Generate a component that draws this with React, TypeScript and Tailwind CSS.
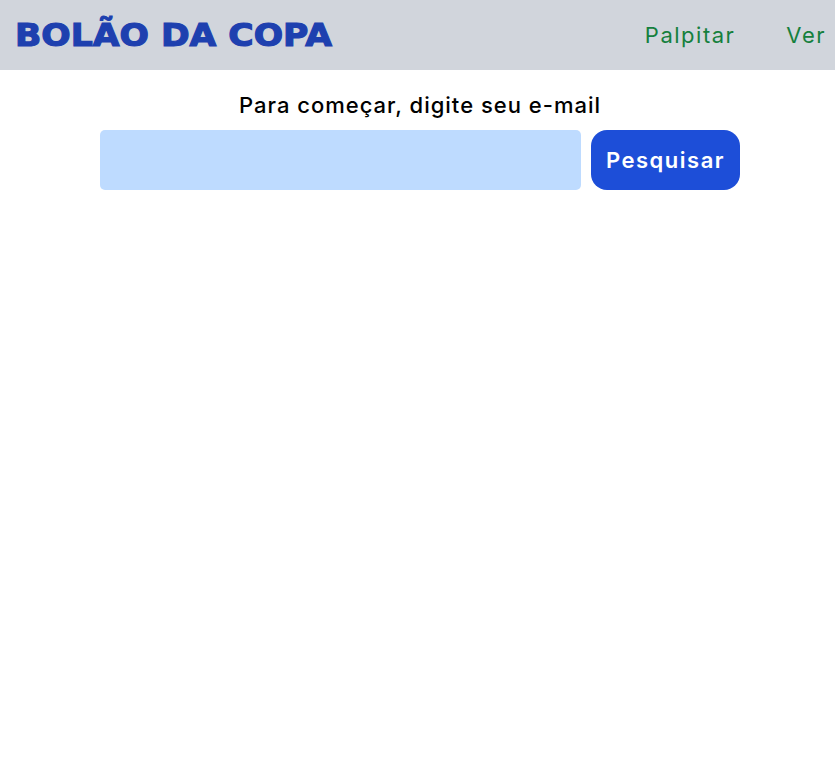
export default function App() {
  return (
    <div className="min-h-screen bg-white overflow-hidden" style={{ fontFamily: "Inter, 'Noto Sans', sans-serif" }}>
      <header className="h-[70px] bg-gray-300 flex items-center justify-between pl-[15px] pr-[9px]">
        <h1
          className="text-[32px] leading-none font-bold text-[#1e40af] origin-left scale-x-[1.08] [-webkit-text-stroke:1.2px_#1e40af]"
          style={{ fontFamily: "'DejaVu Sans', sans-serif" }}
        >
          BOLÃO DA COPA
        </h1>
        <nav className="flex items-center gap-[51px] text-[22px] text-[#15803d] tracking-[1.5px]">
          <a href="#">Palpitar</a>
          <a href="#">Ver</a>
        </nav>
      </header>
      <main className="flex flex-col">
        <p className="mt-[20px] text-center text-[22px] leading-[30px] font-medium text-black tracking-[1px] pl-[5px]">
          Para começar, digite seu e-mail
        </p>
        <form className="mt-[10px] ml-[100px] w-[640px] flex gap-[10px]">
          <input type="email" className="h-[60px] w-[481px] rounded-[5px] bg-blue-200 px-3 outline-none" />
          <button type="button" className="h-[60px] flex-1 rounded-2xl bg-[#1d4ed8] text-white text-[22px] font-semibold tracking-[1.5px]">
            Pesquisar
          </button>
        </form>
      </main>
    </div>
  );
}
